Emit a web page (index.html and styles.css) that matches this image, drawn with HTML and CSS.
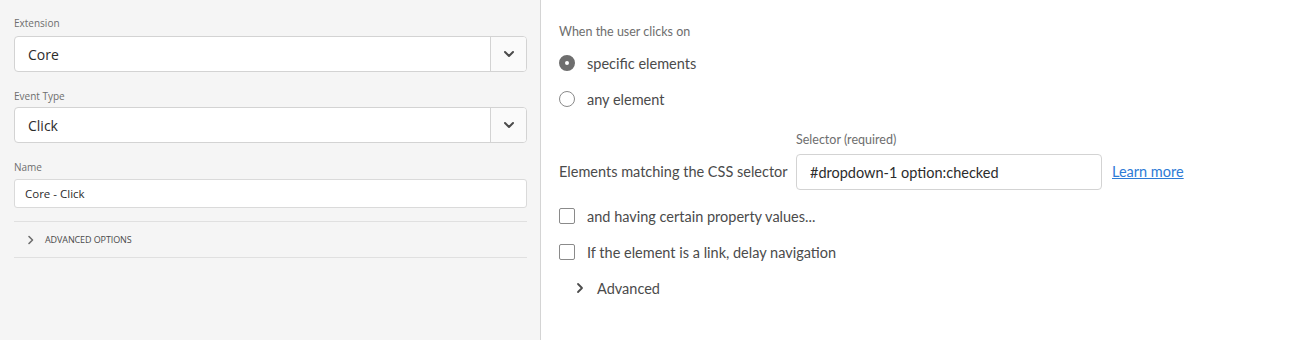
FILE: index.html
```html
<!DOCTYPE html>
<html>
<head>
<meta charset="utf-8">
<link rel="stylesheet" href="styles.css">
</head>
<body>
<div class="page">
  <aside class="left">
    <div class="field field-first">
      <div class="field-label">Extension</div>
      <div class="select">
        <div class="select-value">Core</div>
        <div class="select-btn">
          <svg width="12" height="8" viewBox="0 0 12 8"><path d="M2 2 L6 6 L10 2" fill="none" stroke="#4b4b4b" stroke-width="2" stroke-linecap="round" stroke-linejoin="round"/></svg>
        </div>
      </div>
    </div>
    <div class="field">
      <div class="field-label">Event Type</div>
      <div class="select">
        <div class="select-value">Click</div>
        <div class="select-btn">
          <svg width="12" height="8" viewBox="0 0 12 8"><path d="M2 2 L6 6 L10 2" fill="none" stroke="#4b4b4b" stroke-width="2" stroke-linecap="round" stroke-linejoin="round"/></svg>
        </div>
      </div>
    </div>
    <div class="field field-name">
      <div class="field-label">Name</div>
      <div class="textbox">Core - Click</div>
    </div>
    <div class="accordion">
      <svg class="chev" width="8" height="10" viewBox="0 0 8 10"><path d="M2 1.5 L5.5 5 L2 8.5" fill="none" stroke="#6e6e6e" stroke-width="1.6" stroke-linecap="round" stroke-linejoin="round"/></svg>
      <span class="accordion-title">ADVANCED OPTIONS</span>
    </div>
  </aside>
  <main class="right">
    <div class="heading">When the user clicks on</div>
    <div class="option-row">
      <span class="radio radio-checked"></span>
      <span class="option-text">specific elements</span>
    </div>
    <div class="option-row">
      <span class="radio"></span>
      <span class="option-text">any element</span>
    </div>
    <div class="selector-row">
      <div class="selector-label">Elements matching the CSS selector</div>
      <div class="selector-field">
        <div class="small-label">Selector (required)</div>
        <div class="selector-input">#dropdown-1 option:checked</div>
      </div>
      <a class="learn-more" href="#">Learn more</a>
    </div>
    <div class="option-row check-first">
      <span class="checkbox"></span>
      <span class="option-text">and having certain property values...</span>
    </div>
    <div class="option-row">
      <span class="checkbox"></span>
      <span class="option-text">If the element is a link, delay navigation</span>
    </div>
    <div class="advanced-row">
      <svg class="chev2" width="8" height="12" viewBox="0 0 8 12"><path d="M2 2 L6 6 L2 10" fill="none" stroke="#4b4b4b" stroke-width="1.8" stroke-linecap="round" stroke-linejoin="round"/></svg>
      <span class="option-text">Advanced</span>
    </div>
  </main>
</div>
</body>
</html>
```

FILE: styles.css
```css
html, body {
  margin: 0;
  padding: 0;
  background: #ffffff;
}

.page {
  display: flex;
  height: 340px;
  font-family: "Lato", "Open Sans", sans-serif;
}

.left {
  width: 541px;
  box-sizing: border-box;
  padding: 16px 13px 0 14px;
  background: #f5f5f5;
  border-right: 1px solid #d4d4d4;
  font-family: "Open Sans", sans-serif;
}

.field {
  margin-bottom: 17px;
}

.field-label {
  font-size: 10px;
  line-height: 14px;
  color: #6e6e6e;
  margin-bottom: 4px;
}

.field-first .field-label {
  margin-bottom: 6px;
}

.select {
  display: flex;
  height: 36px;
  box-sizing: border-box;
  border: 1px solid #d3d3d3;
  border-radius: 4px;
  background: #ffffff;
  overflow: hidden;
}

.select-value {
  flex: 1;
  display: flex;
  align-items: center;
  padding-left: 13px;
  font-size: 14px;
  color: #2c2c2c;
}

.select-btn {
  width: 35px;
  display: flex;
  align-items: center;
  justify-content: center;
  border-left: 1px solid #d3d3d3;
  background: #fafafa;
}

.field-name {
  margin-bottom: 13px;
}

.field-name .field-label {
  margin-bottom: 5px;
}

.textbox {
  height: 29px;
  box-sizing: border-box;
  border: 1px solid #dadada;
  border-radius: 3px;
  background: #ffffff;
  padding-left: 10px;
  display: flex;
  align-items: center;
  font-size: 11.5px;
  color: #2c2c2c;
}

.accordion {
  display: flex;
  align-items: center;
  height: 35px;
  border-top: 1px solid #e0e0e0;
  border-bottom: 1px solid #e0e0e0;
  padding-left: 13px;
}

.chev {
  margin-right: 10px;
}

.accordion-title {
  font-size: 9px;
  color: #4b4b4b;
  letter-spacing: -0.1px;
}

.right {
  flex: 1;
  padding: 23px 0 0 18px;
  color: #4b4b4b;
}

.heading {
  font-size: 12.5px;
  line-height: 18px;
  color: #6e6e6e;
  margin-bottom: 4px;
}

.option-row {
  display: flex;
  align-items: center;
  height: 36px;
}

.option-text {
  font-size: 14.5px;
  color: #4b4b4b;
}

.radio {
  width: 16px;
  height: 16px;
  box-sizing: border-box;
  border-radius: 50%;
  border: 1.5px solid #8a8a8a;
  margin-right: 12px;
  background: #ffffff;
}

.radio-checked {
  border: 6px solid #6e6e6e;
}

.checkbox {
  width: 16px;
  height: 16px;
  box-sizing: border-box;
  border: 1.5px solid #8a8a8a;
  border-radius: 2px;
  margin-right: 12px;
  background: #ffffff;
}

.selector-row {
  display: flex;
  align-items: flex-end;
  margin-top: 15px;
}

.selector-label {
  width: 237px;
  height: 36px;
  line-height: 36px;
  font-size: 14.5px;
  color: #4b4b4b;
}

.selector-field {
  display: flex;
  flex-direction: column;
}

.small-label {
  font-size: 12.5px;
  line-height: 16px;
  color: #6e6e6e;
  margin-bottom: 6px;
}

.selector-input {
  width: 306px;
  height: 36px;
  box-sizing: border-box;
  border: 1px solid #d3d3d3;
  border-radius: 4px;
  padding-left: 13px;
  display: flex;
  align-items: center;
  font-size: 14.5px;
  color: #2c2c2c;
}

.learn-more {
  height: 36px;
  line-height: 36px;
  margin-left: 10px;
  font-size: 14.5px;
  color: #2d7bd6;
  text-decoration: underline;
}

.check-first {
  margin-top: 8px;
}

.advanced-row {
  display: flex;
  align-items: center;
  height: 36px;
  padding-left: 17px;
}

.chev2 {
  margin-right: 13px;
}
```
